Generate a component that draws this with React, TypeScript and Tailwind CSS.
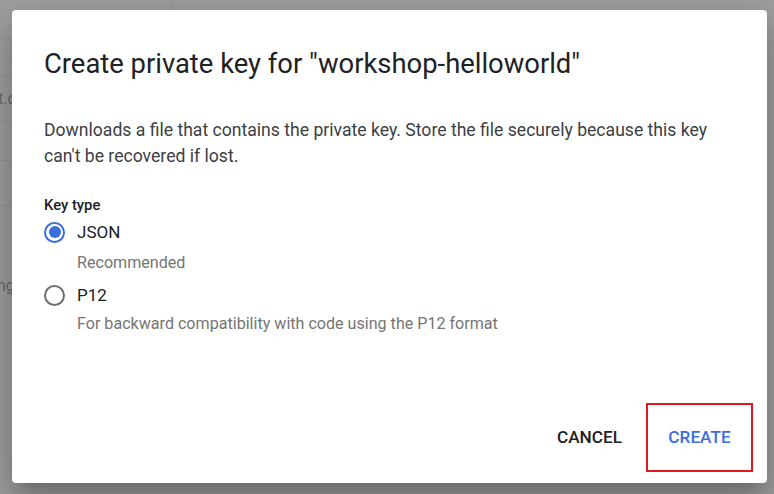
import React from "react";

export default function App() {
  return (
    <div
      className="relative w-[774px] h-[494px] overflow-hidden bg-[#a0a0a0]"
      style={{ fontFamily: "Roboto, 'Noto Sans', Arial, sans-serif" }}
    >
      {/* faint page content behind the scrim */}
      <div className="absolute left-0 top-0 w-[40px] h-full">
        <div className="absolute left-0 top-[38px] w-full h-px bg-[#959595]" />
        <div className="absolute left-0 top-[75px] w-full h-px bg-[#959595]" />
        <div className="absolute left-0 top-[121px] w-full h-px bg-[#959595]" />
        <div className="absolute left-0 top-[160px] w-full h-px bg-[#959595]" />
        <div className="absolute left-0 top-[205px] w-full h-px bg-[#959595]" />
        <div className="absolute left-[-2px] top-[89px] text-[16px] leading-[20px] text-[#6a6a6a]">t.com</div>
        <div className="absolute left-[-3px] top-[276px] text-[16px] leading-[20px] text-[#6a6a6a]">ng</div>
      </div>
      <div className="absolute left-[172px] top-0 w-px h-[10px] bg-[#959595]" />

      {/* dialog */}
      <div className="absolute left-[12px] top-[10px] w-[755px] h-[473px] rounded-[4px] bg-white flex flex-col shadow-[0_11px_15px_-7px_rgba(0,0,0,0.2),0_24px_38px_3px_rgba(0,0,0,0.14),0_9px_46px_8px_rgba(0,0,0,0.12)]">
        <div className="pl-[32px] pr-[24px]">
          <h1 className="pt-[38px] text-[27.4px] leading-[32px] font-normal text-[#202124]">
            Create private key for "workshop-helloworld"
          </h1>
          <p className="mt-[37px] text-[17.6px] leading-[26px] text-[#3c4043]">
            Downloads a file that contains the private key. Store the file securely because this key
            <br />
            can't be recovered if lost.
          </p>
          <div className="mt-[26px] text-[14.8px] leading-[20px] font-medium text-[#202124]">Key type</div>

          <div className="mt-[5px] flex items-center gap-[12px] h-[24px]">
            <span className="w-[21px] h-[21px] rounded-full border-2 border-[#3b6fd8] flex items-center justify-center">
              <span className="w-[12px] h-[12px] rounded-full bg-[#3b6fd8]" />
            </span>
            <span className="text-[17px] leading-[24px] text-[#202124]">JSON</span>
          </div>
          <div className="mt-[9px] pl-[33px] text-[16.1px] leading-[20px] text-[#757575]">Recommended</div>

          <div className="mt-[10px] flex items-center gap-[12px] h-[24px]">
            <span className="w-[21px] h-[21px] rounded-full border-2 border-[#6e6e6e]" />
            <span className="text-[17px] leading-[24px] text-[#202124]">P12</span>
          </div>
          <div className="mt-[7px] pl-[33px] text-[16.1px] leading-[20px] text-[#757575]">
            For backward compatibility with code using the P12 format
          </div>
        </div>

        <div className="mt-auto mb-[11px] mr-[14px] flex items-center justify-end gap-[16px]">
          <button className="px-[8px] h-[40px] text-[17.2px] font-medium text-[#202124]">CANCEL</button>
          <button className="w-[107px] h-[69px] border-2 border-[#e8141e] text-[17.2px] font-medium text-[#3b6fd8]">
            CREATE
          </button>
        </div>
      </div>
    </div>
  );
}
